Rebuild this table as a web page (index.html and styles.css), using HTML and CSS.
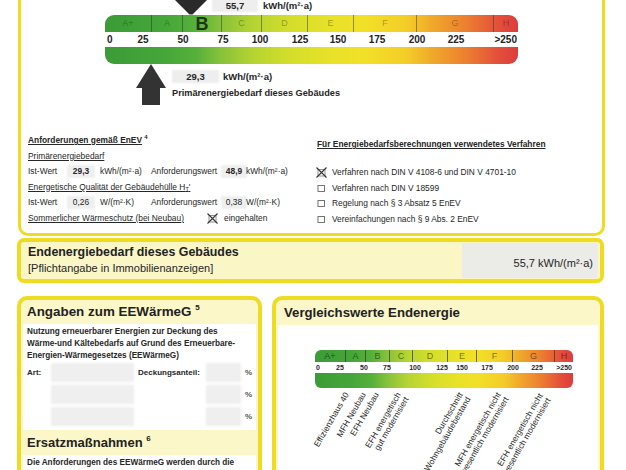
FILE: index.html
```html
<!DOCTYPE html>
<html lang="de">
<head>
<meta charset="utf-8">
<title>Energieausweis</title>
<link rel="stylesheet" href="styles.css">
</head>
<body>
<div class="page">
  <section class="box-top">
    <div class="scale">
      <div class="scale-head">
        <svg class="tri-down" width="32" height="15" viewBox="0 0 32 15"><polygon points="0,0 32,0 17.5,14.5 14.5,14.5" fill="#2a2a2a"/></svg>
        <span class="val-blur val-top">55,7</span>
        <span class="unit-big">kWh/(m²·a)</span>
      </div>
      <div class="bar">
        <div class="bar-classes">
          <span class="seg" style="width:47px">A+</span>
          <span class="seg" style="width:31px">A</span>
          <span class="seg seg-b" style="width:39px">B</span>
          <span class="seg" style="width:40px">C</span>
          <span class="seg" style="width:46px">D</span>
          <span class="seg" style="width:46px">E</span>
          <span class="seg" style="width:63px">F</span>
          <span class="seg" style="width:77px">G</span>
          <span class="seg" style="width:24px">H</span>
        </div>
        <div class="bar-nums">
          <span>0</span><span>25</span><span>50</span><span>75</span><span>100</span><span>125</span><span>150</span><span>175</span><span>200</span><span>225</span><span>&gt;250</span>
        </div>
        <div class="bar-grad"></div>
      </div>
      <div class="scale-foot">
        <svg class="arrow-up" width="30" height="41" viewBox="0 0 30 41"><polygon points="15,0 30,24 24,24 24,41 6,41 6,24 0,24" fill="#333"/></svg>
        <div class="foot-text">
          <div class="foot-val"><span class="val-blur val-low">29,3</span><span class="unit-big">kWh/(m²·a)</span></div>
          <div class="foot-label">Primärenergiebedarf dieses Gebäudes</div>
        </div>
      </div>
    </div>

    <div class="req">
      <div class="req-left">
        <div class="row hb"><span class="u">Anforderungen gemäß EnEV</span> <sup>4</sup></div>
        <div class="row"><span class="u">Primärenergiebedarf</span></div>
        <div class="row vrow">
          <span>Ist-Wert</span><span class="vcell b">29,3</span><span class="unit">kWh/(m²·a)</span>
          <span>Anforderungswert</span><span class="vcell b">48,9</span><span>kWh/(m²·a)</span>
        </div>
        <div class="row"><span class="u">Energetische Qualität der Gebäudehülle H<sub>T</sub>'</span></div>
        <div class="row vrow">
          <span>Ist-Wert</span><span class="vcell">0,26</span><span class="unit">W/(m²·K)</span>
          <span>Anforderungswert</span><span class="vcell">0,38</span><span>W/(m²·K)</span>
        </div>
        <div class="row srow">
          <span class="u">Sommerlicher Wärmeschutz (bei Neubau)</span>
          <svg class="xbox" width="11" height="11" viewBox="0 0 11 11"><rect x="2" y="2.5" width="7" height="6.5" fill="none" stroke="#777" stroke-width="0.8"/><path d="M0.5 0.5 L10.5 10.5 M10.5 0.5 L0.5 10.5" stroke="#333" stroke-width="1.1"/></svg>
          <span>eingehalten</span>
        </div>
      </div>
      <div class="req-right">
        <div class="row hb"><span class="u">Für Energiebedarfsberechnungen verwendetes Verfahren</span></div>
        <div class="rlist">
          <div class="row rrow"><span class="cb"><svg width="11" height="11" viewBox="0 0 11 11"><rect x="2" y="2.5" width="7" height="6.5" fill="none" stroke="#777" stroke-width="0.8"/><path d="M0.5 0.5 L10.5 10.5 M10.5 0.5 L0.5 10.5" stroke="#333" stroke-width="1.1"/></svg></span><span>Verfahren nach DIN V 4108-6 und DIN V 4701-10</span></div>
          <div class="row rrow"><span class="cb"><svg width="11" height="11" viewBox="0 0 11 11"><rect x="2" y="2.5" width="6.5" height="6" fill="none" stroke="#666" stroke-width="0.9"/></svg></span><span>Verfahren nach DIN V 18599</span></div>
          <div class="row rrow"><span class="cb"><svg width="11" height="11" viewBox="0 0 11 11"><rect x="2" y="2.5" width="6.5" height="6" fill="none" stroke="#666" stroke-width="0.9"/></svg></span><span>Regelung nach § 3 Absatz 5 EnEV</span></div>
          <div class="row rrow"><span class="cb"><svg width="11" height="11" viewBox="0 0 11 11"><rect x="2" y="2.5" width="6.5" height="6" fill="none" stroke="#666" stroke-width="0.9"/></svg></span><span>Vereinfachungen nach § 9 Abs. 2 EnEV</span></div>
        </div>
      </div>
    </div>
  </section>

  <section class="box-end">
    <div class="end-text">
      <div class="end-title">Endenergiebedarf dieses Gebäudes</div>
      <div class="end-sub">[Pflichtangabe in Immobilienanzeigen]</div>
    </div>
    <div class="end-val">55,7 kWh/(m²·a)</div>
  </section>

  <div class="bottom">
    <section class="panel panel-left">
      <div class="panel-head">Angaben zum EEWärmeG <sup>5</sup></div>
      <div class="panel-body body-ee">
        <p class="ee-text">Nutzung erneuerbarer Energien zur Deckung des<br>Wärme-und Kältebedarfs auf Grund des Erneuerbare-<br>Energien-Wärmegesetzes (EEWärmeG)</p>
        <div class="ee-row"><span>Art:</span><span class="blur"></span><span></span><span>Deckungsanteil:</span><span class="blur"></span><span></span><span class="pct">%</span></div>
        <div class="ee-row"><span></span><span class="blur"></span><span></span><span></span><span class="blur"></span><span></span><span class="pct">%</span></div>
        <div class="ee-row"><span></span><span class="blur"></span><span></span><span></span><span class="blur"></span><span></span><span class="pct">%</span></div>
      </div>
      <div class="panel-head head-ersatz">Ersatzmaßnahmen <sup>6</sup></div>
      <div class="panel-body body-ersatz">
        <p class="ee-text">Die Anforderungen des EEWärmeG werden durch die</p>
      </div>
    </section>

    <section class="panel panel-right">
      <div class="panel-head head-vgl">Vergleichswerte Endenergie</div>
      <div class="panel-body body-vgl">
        <div class="sbar">
          <div class="sbar-classes">
            <span class="sseg" style="width:31px">A+</span>
            <span class="sseg" style="width:20px">A</span>
            <span class="sseg" style="width:24px">B</span>
            <span class="sseg" style="width:23px">C</span>
            <span class="sseg" style="width:35px">D</span>
            <span class="sseg" style="width:29px">E</span>
            <span class="sseg" style="width:36px">F</span>
            <span class="sseg" style="width:42px">G</span>
            <span class="sseg" style="width:18px">H</span>
          </div>
          <div class="sbar-nums">
            <span>0</span><span>25</span><span>50</span><span>75</span><span>100</span><span>125</span><span>150</span><span>175</span><span>200</span><span>225</span><span>&gt;250</span>
          </div>
          <div class="sbar-grad"></div>
        </div>
        <div class="labels">
          <div class="lbl l1">Effizienzhaus 40</div>
          <div class="lbl l2">MFH Neubau</div>
          <div class="lbl l3">EFH Neubau</div>
          <div class="lbl l4">EFH energetisch<br>gut modernisiert</div>
          <div class="lbl l5">Durchschnitt<br>Wohngebäudebestand</div>
          <div class="lbl l6">MFH energetisch nicht<br>wesentlich modernisiert</div>
          <div class="lbl l7">EFH energetisch nicht<br>wesentlich modernisiert</div>
        </div>
      </div>
    </section>
  </div>
</div>
</body>
</html>
```

FILE: styles.css
```css
* { box-sizing: border-box; margin: 0; padding: 0; }
html, body { width: 626px; height: 470px; overflow: hidden; background: #fff; }
body { font-family: "Liberation Sans", Arial, sans-serif; color: #262626; }
.page { width: 626px; }

sup { font-size: 6px; vertical-align: 4px; line-height: 0; }
sub { font-size: 5.5px; vertical-align: -1px; line-height: 0; }
.u { text-decoration: underline; text-underline-offset: 1px; }
.b { font-weight: bold; }

/* ---------- top box ---------- */
.box-top {
  margin-left: 18px;
  width: 587px;
  height: 236px;
  border: 3px solid #efdc22;
  border-top: 0;
  border-radius: 0 0 10px 10px;
  background: #fff;
}
.scale { padding-left: 84px; }
.scale-head { display: flex; align-items: flex-start; height: 15px; }
.tri-down { margin-left: 70px; flex: none; }
.val-blur {
  background: #eeeeee;
  box-shadow: 0 0 2px 1px #eeeeee;
  font-weight: bold;
  text-align: center;
}
.val-top { margin-left: 6px; width: 44px; height: 11px; line-height: 12px; font-size: 9.5px; }
.unit-big { font-size: 9.5px; font-weight: bold; line-height: 12px; margin-left: 6px; }

.bar { width: 413px; border-radius: 9px; overflow: hidden; }
.bar-classes, .bar-grad, .sbar-classes, .sbar-grad {
  background: linear-gradient(90deg, #3b9c37 0%, #44a639 14%, #56b03a 22%, #86c23a 28%, #b6d432 36%, #d4de2b 45%, #e8e228 55%, #f2e027 63%, #f3cd27 73%, #f0a52b 80%, #ec7c30 88%, #e4503a 95%, #dd3c3e 100%);
}
.bar-classes { display: flex; height: 17px; }
.seg {
  height: 17px;
  line-height: 17px;
  text-align: center;
  font-size: 9px;
  color: rgba(0, 0, 0, 0.32);
  border-right: 1px solid rgba(40, 40, 40, 0.45);
}
.seg:last-child { border-right: 0; }
.seg-b { font-size: 18px; font-weight: bold; color: #1d3512; line-height: 18px; }
.bar-nums {
  display: grid;
  grid-template-columns: 21px 34px 46px 34px 40px 40px 36px 42px 38px 40px 42px;
  height: 15px;
  line-height: 15px;
  background: #fff;
  font-size: 10px;
  font-weight: bold;
  text-align: center;
  color: #222;
}
.bar-nums span:first-child { text-align: left; padding-left: 2px; }
.bar-nums span:last-child { text-align: right; padding-right: 1px; }
.bar-grad { height: 17px; }

.scale-foot { display: flex; height: 42px; }
.arrow-up { margin-left: 31px; flex: none; }
.foot-text { margin-left: 6px; padding-top: 6px; }
.foot-val { display: flex; height: 13px; align-items: center; }
.val-low { width: 45px; height: 11px; line-height: 12px; font-size: 9.5px; margin-left: 1px; }
.foot-val .unit-big { margin-left: 5px; }
.foot-label { margin-top: 4px; font-size: 9.2px; font-weight: bold; line-height: 13px; }

.req {
  display: grid;
  grid-template-columns: 289px 1fr;
  padding-left: 7px;
  margin-top: 27px;
  font-size: 8.4px;
}
.row { height: 15.5px; line-height: 15.5px; white-space: nowrap; }
.hb { font-weight: bold; }
.vrow { display: grid; grid-template-columns: 40px 26px 57px 71px 24px auto; align-items: center; }
.vrow .unit { padding-left: 6px; }
.vcell {
  height: 11px;
  line-height: 11px;
  text-align: center;
  background: #efefef;
  box-shadow: 0 0 2px 1px #efefef;
}
.srow { display: grid; grid-template-columns: 179px 17px auto; align-items: center; }
.xbox { display: block; }

.req-right { padding-top: 4px; }
.rlist { margin-top: 12.5px; }
.rrow { display: flex; align-items: center; }
.cb { width: 15px; display: flex; align-items: center; }
.cb svg { display: block; margin-left: -1px; }

/* ---------- Endenergie ---------- */
.box-end {
  margin: 2px 0 0 17px;
  width: 587px;
  height: 45px;
  border: 4px solid #efdc22;
  border-radius: 7px;
  background: #fbf6c6;
  display: flex;
}
.end-text { padding: 3px 0 0 7px; }
.end-title { font-size: 12.4px; font-weight: bold; line-height: 14px; color: #222; }
.end-sub { margin-top: 3px; font-size: 11px; line-height: 13px; }
.end-val {
  margin: 1px 2px 1px auto;
  width: 136px;
  background: #ebebe8;
  display: flex;
  align-items: center;
  justify-content: flex-end;
  padding: 4px 5px 0 0;
  font-size: 11px;
}

/* ---------- bottom panels ---------- */
.bottom { display: flex; gap: 10px; margin: 13px 0 0 17px; }
.panel {
  border: 4px solid #efdc22;
  border-radius: 10px;
  background: #fbf7c9;
  height: 186px;
  overflow: hidden;
}
.panel-left { width: 245px; }
.panel-right { width: 332px; }
.panel-head {
  height: 24px;
  line-height: 24px;
  padding-left: 6px;
  font-size: 13.4px;
  font-weight: bold;
  color: #222;
}
.panel-head sup { font-size: 8px; vertical-align: 6px; }
.panel-body { background: #fff; margin: 0 2px; padding: 2px 0 0 4px; }
.ee-text { font-size: 8.2px; font-weight: bold; line-height: 12px; white-space: nowrap; }
.body-ee { height: 106px; }
.ee-row {
  display: grid;
  grid-template-columns: 25px 81px 5px 69px 33px 5px auto;
  height: 18px;
  margin-top: 4px;
  align-items: center;
  font-size: 8px;
  font-weight: bold;
}
.ee-row:first-of-type { margin-top: 1px; }
.ee-row .blur { height: 17px; background: #efefef; box-shadow: 0 0 3px 1px #efefef; }
.ee-row .pct { color: #555; font-size: 8px; }
.head-ersatz { height: 25px; line-height: 25px; font-size: 13px; }
.body-ersatz { height: 40px; }

.head-vgl { height: 25px; line-height: 25px; padding-left: 8px; font-size: 13.2px; }
.body-vgl { height: 160px; padding: 25px 0 0 37px; }
.sbar { width: 258px; border-radius: 6px; overflow: hidden; }
.sbar-classes { display: flex; height: 12px; }
.sseg {
  height: 12px;
  line-height: 12px;
  text-align: center;
  font-size: 9px;
  color: rgba(0, 0, 0, 0.5);
  border-right: 1.5px solid rgba(50, 50, 50, 0.7);
}
.sseg:last-child { border-right: 0; }
.sbar-nums {
  display: grid;
  grid-template-columns: 14px 22px 26px 20px 36px 18px 22px 28px 24px 24px 24px;
  height: 11px;
  line-height: 11px;
  background: #fff;
  font-size: 7px;
  font-weight: bold;
  text-align: center;
  white-space: nowrap;
}
.sbar-nums span:first-child { text-align: left; padding-left: 1px; }
.sbar-nums span:last-child { text-align: right; padding-right: 1px; }
.sbar-grad { height: 15px; }

.labels { position: relative; width: 258px; height: 90px; }
.lbl {
  position: absolute;
  width: 140px;
  text-align: right;
  font-size: 8.4px;
  line-height: 8.5px;
  white-space: nowrap;
  color: #1e1e1e;
  transform-origin: 100% 0;
  transform: rotate(-60deg);
}
.l1 { left: -112px; top: 3px; }
.l2 { left: -95px; top: 3px; }
.l3 { left: -82px; top: 3px; }
.l4 { left: -60px; top: 3px; }
.l5 { left: 2px; top: 3px; }
.l6 { left: 40px; top: 3px; }
.l7 { left: 82px; top: 4px; }
```
